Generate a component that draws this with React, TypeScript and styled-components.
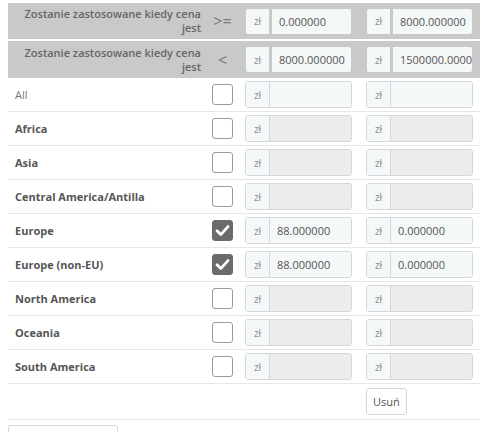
import * as React from 'react';
import styled, { createGlobalStyle } from 'styled-components';

const GlobalStyle = createGlobalStyle`
	html, body {
		margin: 0;
		padding: 0;
		background: #ffffff;
		font-family: 'Open Sans', 'Liberation Sans', sans-serif;
	}
`;

type Zone = {
	name: string;
	bold: boolean;
	checked: boolean;
	from: string;
	to: string;
	enabled: boolean;
};

const zones: Zone[] = [
	{ name: 'All', bold: false, checked: false, from: '', to: '', enabled: true },
	{ name: 'Africa', bold: true, checked: false, from: '', to: '', enabled: false },
	{ name: 'Asia', bold: true, checked: false, from: '', to: '', enabled: false },
	{ name: 'Central America/Antilla', bold: true, checked: false, from: '', to: '', enabled: false },
	{ name: 'Europe', bold: true, checked: true, from: '88.000000', to: '0.000000', enabled: true },
	{ name: 'Europe (non-EU)', bold: true, checked: true, from: '88.000000', to: '0.000000', enabled: true },
	{ name: 'North America', bold: true, checked: false, from: '', to: '', enabled: false },
	{ name: 'Oceania', bold: true, checked: false, from: '', to: '', enabled: false },
	{ name: 'South America', bold: true, checked: false, from: '', to: '', enabled: false },
];

const App = () => {
	return (
		<>
			<GlobalStyle />
			<Page>
				<HeadRow>
					<HeadLabel>Zostanie zastosowane kiedy cena jest</HeadLabel>
					<Operator>&gt;=</Operator>
					<Cell>
						<PriceInput value="0.000000" onGray />
					</Cell>
					<Cell>
						<PriceInput value="8000.000000" onGray />
					</Cell>
				</HeadRow>
				<HeadRow $last>
					<HeadLabel>Zostanie zastosowane kiedy cena jest</HeadLabel>
					<Operator>&lt;</Operator>
					<Cell>
						<PriceInput value="8000.000000" onGray />
					</Cell>
					<Cell>
						<PriceInput value="1500000.000000" onGray />
					</Cell>
				</HeadRow>
				{zones.map((z) => (
					<Row key={z.name}>
						<ZoneName $bold={z.bold}>{z.name}</ZoneName>
						<CheckCell>
							<CheckBox $checked={z.checked}>
								{z.checked && (
									<svg width="21" height="21" viewBox="0 0 21 21">
										<path
											d="M5 10.8 L8.8 14.6 L16 6.6"
											fill="none"
											stroke="#ffffff"
											strokeWidth="2.8"
											strokeLinecap="round"
											strokeLinejoin="round"
										/>
									</svg>
								)}
							</CheckBox>
						</CheckCell>
						<Cell>
							<PriceInput value={z.from} disabled={!z.enabled} />
						</Cell>
						<Cell>
							<PriceInput value={z.to} disabled={!z.enabled} />
						</Cell>
					</Row>
				))}
				<Row $tall>
					<span />
					<span />
					<span />
					<Cell>
						<DeleteButton>Usuń</DeleteButton>
					</Cell>
				</Row>
				<AddButton />
			</Page>
		</>
	);
};

export default App;

const PriceInput = ({ value, disabled, onGray }: { value: string; disabled?: boolean; onGray?: boolean }) => (
	<InputGroup $onGray={onGray}>
		<Addon $onGray={onGray}>zł</Addon>
		<Field $disabled={disabled}>{value}</Field>
	</InputGroup>
);

const Page = styled.div`
	width: 472px;
	padding: 3px 6px 0 8px;
`;

const HeadRow = styled.div<{ $last?: boolean }>`
	display: grid;
	grid-template-columns: 197px 34px 121px 120px;
	align-items: center;
	height: ${(p) => (p.$last ? '37px' : '36px')};
	margin-bottom: ${(p) => (p.$last ? '0' : '2px')};
	background-color: #c9c9c9;
`;

const HeadLabel = styled.div`
	padding: 0 4px 0 2px;
	text-align: right;
	font-size: 11px;
	line-height: 14px;
	font-weight: 600;
	color: #666666;
`;

const Operator = styled.div`
	text-align: center;
	font-size: 16px;
	color: #7a7a7a;
	padding-left: 1px;
`;

const Row = styled.div<{ $tall?: boolean }>`
	display: grid;
	grid-template-columns: 197px 34px 121px 120px;
	align-items: center;
	box-sizing: border-box;
	height: ${(p) => (p.$tall ? '36px' : '34px')};
	border-bottom: 1px solid #e6e6e6;
`;

const ZoneName = styled.div<{ $bold: boolean }>`
	padding-left: 7px;
	font-size: 11px;
	font-weight: ${(p) => (p.$bold ? 700 : 400)};
	color: ${(p) => (p.$bold ? '#555555' : '#777777')};
`;

const CheckCell = styled.div`
	display: flex;
	justify-content: center;
`;

const CheckBox = styled.div<{ $checked: boolean }>`
	width: 21px;
	height: 21px;
	box-sizing: border-box;
	border-radius: 3px;
	border: 1px solid ${(p) => (p.$checked ? '#6b6b6b' : '#9a9a9a')};
	background-color: ${(p) => (p.$checked ? '#6b6b6b' : '#ffffff')};
	display: flex;
	align-items: center;
	justify-content: center;
	svg {
		margin: -1px;
	}
`;

const Cell = styled.div`
	padding-left: 6px;
	display: flex;
`;

const InputGroup = styled.div<{ $onGray?: boolean }>`
	display: flex;
	width: 107px;
	height: 27px;
	box-sizing: border-box;
	border: 1px solid ${(p) => (p.$onGray ? '#c9c9c9' : '#d2d8db')};
	border-radius: 3px;
	overflow: hidden;
`;

const Addon = styled.div<{ $onGray?: boolean }>`
	width: 23px;
	flex: none;
	display: flex;
	align-items: center;
	justify-content: center;
	background-color: #f5f8f9;
	border-right: ${(p) => (p.$onGray ? '3px solid #c9c9c9' : '1px solid #d2d8db')};
	font-size: 10px;
	color: #8c8c8c;
`;

const Field = styled.div<{ $disabled?: boolean }>`
	flex: 1;
	display: flex;
	align-items: center;
	padding-left: 7px;
	overflow: hidden;
	white-space: nowrap;
	background-color: ${(p) => (p.$disabled ? '#ececec' : '#f5f8f9')};
	font-size: 11px;
	color: #555555;
`;

const DeleteButton = styled.div`
	height: 27px;
	box-sizing: border-box;
	padding: 0 6px;
	display: flex;
	align-items: center;
	border: 1px solid #d6d6d6;
	border-radius: 3px;
	background-color: #ffffff;
	font-size: 11px;
	color: #555555;
`;

const AddButton = styled.div`
	margin-top: 5px;
	width: 110px;
	height: 27px;
	box-sizing: border-box;
	border: 1px solid #d6d6d6;
	border-radius: 3px;
`;
